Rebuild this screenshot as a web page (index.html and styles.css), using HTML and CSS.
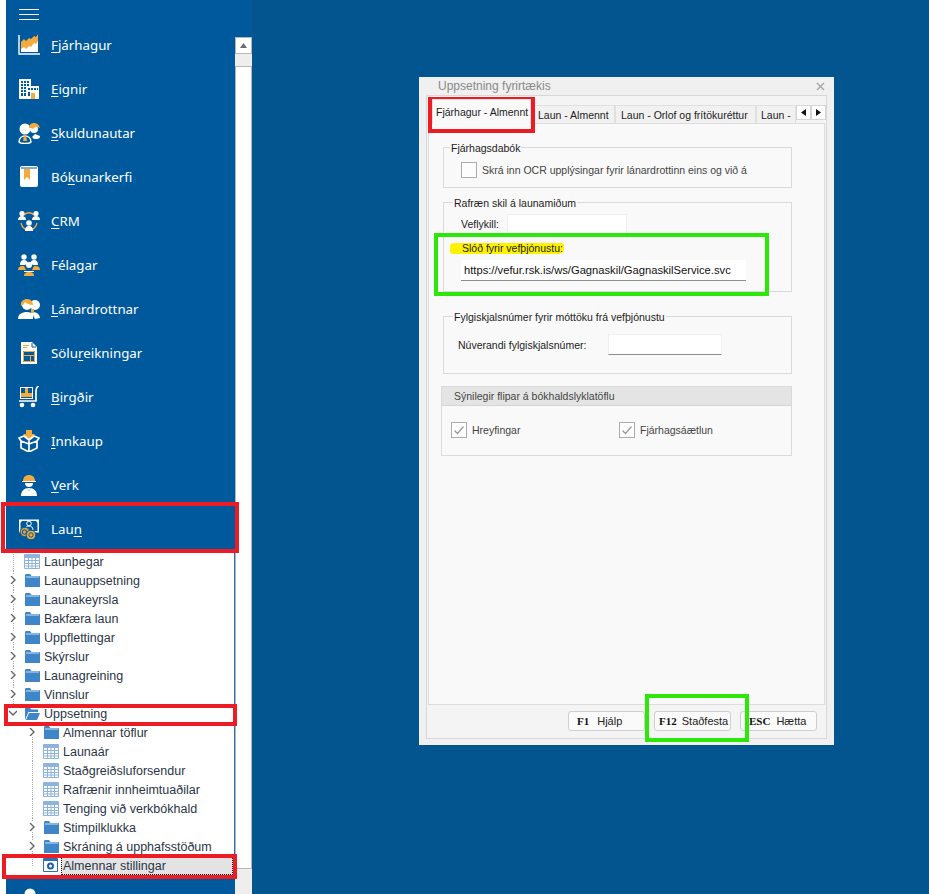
FILE: index.html
```html
<!DOCTYPE html>
<html lang="is">
<head>
<meta charset="utf-8">
<title>Uppsetning fyrirtækis</title>
<link rel="stylesheet" href="styles.css">
</head>
<body>
<div class="app">
  <aside class="sidebar">
    <nav class="nav">
      <div class="topbar"><span class="burger"><i></i><i></i><i></i></span></div>

      <a class="item"><svg class="ico" viewBox="0 0 22 22"><path d="M1 1v19h21" fill="none" stroke="#fff" stroke-width="1.400"/><path d="M3 18v-7l3-2 2 2 3-3 2 1 3-4 2 1 2-3v15z" fill="#fff"/><path d="M3 12V8l3-3 2 2 3-3 2 1 3-3 2 1 2-3v7l-2 3-2-1-3 4-2-1-3 3-2-2-3 2z" fill="#f2ab3c"/></svg><span><u>F</u>járhagur</span></a>

      <a class="item"><svg class="ico" viewBox="0 0 22 22"><path d="M1 1h12v7h8v13H1z" fill="#fff"/><path d="M3 3h2v2H3zm3 0h2v2H6zm3 0h2v2H9zM3 6h2v2H3zm3 0h2v2H6zm3 0h2v2H9zM3 9h2v2H3zm3 0h2v2H6zM3 12h2v2H3zm3 0h2v2H6zM3 15h2v3H3zm3 0h2v3H6zM10 10h2v2h-2zm3 0h2v2h-2zm3 0h2v2h-2zm3 0h1v2h-1zM10 14h2v4h-2z" fill="#00599c"/><path d="M13 15h4v6h-4z" fill="#f2ab3c"/></svg><span><u>E</u>ignir</span></a>

      <a class="item"><svg class="ico" viewBox="0 0 22 22"><circle cx="7" cy="7" r="5.500" fill="#fff"/><path d="M1 20c0-4 3-6 6-6s6 2 6 6c-2 2-10 2-12 0z" fill="none" stroke="#fff" stroke-width="1.500"/><path d="M6 13h2l1 6H5z" fill="#f2ab3c"/><circle cx="16" cy="7" r="4" fill="#fff"/><path d="M11 6c0-4 3-5 5-5s5 1 6 5c-3-2-6-1-7 1-1-1-2-1-4-1z" fill="#f2ab3c"/><path d="M14 15l3-3 5 2c0 2-1 3-3 3h-3z" fill="#fff"/></svg><span><u>S</u>kuldunautar</span></a>

      <a class="item"><svg class="ico" viewBox="0 0 22 22"><rect x="2" y="0" width="18" height="21" rx="2" fill="#fff"/><path d="M3 2h16" stroke="#00599c" stroke-width="1"/><path d="M6 3h6v11l-3-3-3 3z" fill="#f2ab3c"/></svg><span>Bó<u>k</u>unarkerfi</span></a>

      <a class="item"><svg class="ico" viewBox="0 0 22 22"><path d="M6 5c3-3 7-3 10 0M3 13c1 4 3 6 6 7M19 13c-1 4-3 6-6 7" fill="none" stroke="#f2ab3c" stroke-width="1.300"/><circle cx="4" cy="3.500" r="2.600" fill="#fff"/><path d="M0 10c0-3 2-4 4-4s4 1 4 4z" fill="#fff"/><circle cx="18" cy="3.500" r="2.600" fill="#fff"/><path d="M14 10c0-3 2-4 4-4s4 1 4 4z" fill="#fff"/><circle cx="11" cy="13" r="2.800" fill="#fff"/><path d="M7 21c0-4 2-5 4-5s4 1 4 5z" fill="#fff"/></svg><span><u>C</u>RM</span></a>

      <a class="item"><svg class="ico" viewBox="0 0 22 22"><circle cx="6" cy="3" r="2.700" fill="#fff"/><circle cx="16" cy="3" r="2.700" fill="#fff"/><path d="M2 11c0-4 2-5 4-5s3 1 4 3l-3 2zM20 11c0-4-2-5-4-5s-3 1-4 3l3 2z" fill="#fff"/><path d="M0 16c0-3 2-4 4-4h2l2 4zM22 16c0-3-2-4-4-4h-2l-2 4z" fill="#f2ab3c"/><circle cx="11" cy="11" r="3" fill="#fff"/><path d="M6 17h10v1H6z" fill="#fff"/><path d="M6 22c0-3 2-4 5-4s5 1 5 4z" fill="#f2ab3c"/></svg><span>Félagar</span></a>

      <a class="item"><svg class="ico" viewBox="0 0 22 22"><circle cx="17" cy="7" r="5" fill="#fff"/><path d="M13 14c3 0 8 0 9 6l-5 1z" fill="#fff"/><circle cx="9" cy="7" r="5" fill="#fff"/><path d="M3 8c-1-5 3-7 6-7 4 0 6 3 6 6-3 0-6-1-8-3-1 2-2 3-4 4z" fill="#f2ab3c"/><path d="M0 21c0-5 4-7 9-7 3 0 5 1 6 2v5z" fill="#fff"/><path d="M13 11h3v4h-3z" fill="#f2ab3c"/></svg><span><u>L</u>ánardrottnar</span></a>

      <a class="item"><svg class="ico" viewBox="0 0 22 22"><path d="M3 0h11l5 5v17H3z" fill="#fff"/><path d="M5 9h12v11H5z" fill="#00599c"/><path d="M5.500 9.500h11v10h-11zM5.500 13.500h11M12.500 13.500v6" fill="none" stroke="#f2ab3c"/><path d="M5 3h6v1H5zM5 5h4v1H5z" fill="#f2ab3c"/><path d="M14 1v4h4" fill="none" stroke="#00599c"/></svg><span>Sölu<u>r</u>eikningar</span></a>

      <a class="item"><svg class="ico" viewBox="0 0 22 22"><path d="M2 1h13v12H2z" fill="#fff"/><path d="M3 2h11v10H3z" fill="#00599c"/><path d="M3 7h11v4H3zM7 2h3v5H7z" fill="#f2ab3c"/><path d="M21 0c-3 1-3 3-3 5v10H1" fill="none" stroke="#fff" stroke-width="1.700"/><circle cx="4" cy="19" r="2.300" fill="#fff"/><circle cx="15" cy="19" r="2.300" fill="#fff"/></svg><span><u>B</u>irgðir</span></a>

      <a class="item"><svg class="ico" viewBox="0 0 22 22"><path d="M8 0h6v4h3l-6 6-6-6h3z" fill="#f2ab3c"/><path d="M1 8l5-2 5 4 5-4 5 2-2 3v7l-8 4-8-4v-7zM11 11v10M3 11l8 3 8-3" fill="none" stroke="#fff" stroke-width="1.700" stroke-linejoin="round"/></svg><span><u>I</u>nnkaup</span></a>

      <a class="item"><svg class="ico" viewBox="0 0 22 22"><path d="M5 7c0-4 3-6 6-6s6 2 6 6z" fill="#f2ab3c"/><path d="M4 7h14v1H4z" fill="#fff"/><path d="M7 9h8c0 3-2 4-4 4s-4-1-4-4z" fill="#fff"/><path d="M3 22c0-5 3-8 8-8s8 3 8 8z" fill="#fff"/><path d="M9 14l2 3 2-3" fill="none" stroke="#bcd3e6"/></svg><span><u>V</u>erk</span></a>

      <a class="item"><svg class="ico" viewBox="0 0 22 22"><path d="M1 1.500h20v13H1z" fill="#fff"/><path d="M2.500 3h17v10h-17z" fill="#00599c"/><path d="M2 2h3L2 5zM20 2h-3l3 3z" fill="#fff"/><circle cx="11" cy="5.500" r="2.300" fill="none" stroke="#fff"/><path d="M7 12c0-3 2-4 4-4s4 1 4 4" fill="none" stroke="#fff"/><circle cx="7" cy="14" r="4.800" fill="#d9a04a" stroke="#00599c"/><circle cx="13" cy="17" r="4.800" fill="#f2ab3c" stroke="#00599c"/><circle cx="13" cy="17" r="2.200" fill="none" stroke="#00599c"/><circle cx="6.500" cy="14" r="2.200" fill="none" stroke="#00599c"/></svg><span>Lau<u>n</u></span></a>

      <ul class="tree">
        <li class="row l1"><span class="twist"></span><svg class="tbl" viewBox="0 0 16 15"><use href="#grid"/></svg><span class="lab">Launþegar</span></li>
        <li class="row l1 more"><span class="twist"><svg class="chev" viewBox="0 0 6 8"><path d="M1 0l4 4-4 4" fill="none" stroke="#666" stroke-width="1.400"/></svg></span><svg class="fold" viewBox="0 0 15 13"><use href="#folder"/></svg><span class="lab">Launauppsetning</span></li>
        <li class="row l1 more"><span class="twist"><svg class="chev" viewBox="0 0 6 8"><path d="M1 0l4 4-4 4" fill="none" stroke="#666" stroke-width="1.400"/></svg></span><svg class="fold" viewBox="0 0 15 13"><use href="#folder"/></svg><span class="lab">Launakeyrsla</span></li>
        <li class="row l1 more"><span class="twist"><svg class="chev" viewBox="0 0 6 8"><path d="M1 0l4 4-4 4" fill="none" stroke="#666" stroke-width="1.400"/></svg></span><svg class="fold" viewBox="0 0 15 13"><use href="#folder"/></svg><span class="lab">Bakfæra laun</span></li>
        <li class="row l1 more"><span class="twist"><svg class="chev" viewBox="0 0 6 8"><path d="M1 0l4 4-4 4" fill="none" stroke="#666" stroke-width="1.400"/></svg></span><svg class="fold" viewBox="0 0 15 13"><use href="#folder"/></svg><span class="lab">Uppflettingar</span></li>
        <li class="row l1 more"><span class="twist"><svg class="chev" viewBox="0 0 6 8"><path d="M1 0l4 4-4 4" fill="none" stroke="#666" stroke-width="1.400"/></svg></span><svg class="fold" viewBox="0 0 15 13"><use href="#folder"/></svg><span class="lab">Skýrslur</span></li>
        <li class="row l1 more"><span class="twist"><svg class="chev" viewBox="0 0 6 8"><path d="M1 0l4 4-4 4" fill="none" stroke="#666" stroke-width="1.400"/></svg></span><svg class="fold" viewBox="0 0 15 13"><use href="#folder"/></svg><span class="lab">Launagreining</span></li>
        <li class="row l1 more"><span class="twist"><svg class="chev" viewBox="0 0 6 8"><path d="M1 0l4 4-4 4" fill="none" stroke="#666" stroke-width="1.400"/></svg></span><svg class="fold" viewBox="0 0 15 13"><use href="#folder"/></svg><span class="lab">Vinnslur</span></li>
        <li class="row l1 end"><span class="twist"><svg class="chev down" viewBox="0 0 8 6"><path d="M0 1l4 4 4-4" fill="none" stroke="#666" stroke-width="1.400"/></svg></span><svg class="fold" viewBox="0 0 15 13"><path d="M0 13V1h5l1.500 1.500H13V5H3.500zM1 13h11l3-7H4z" fill="#3f86c9"/></svg><span class="lab">Uppsetning</span></li>
        <li class="row l2 more"><span class="twist"><svg class="chev" viewBox="0 0 6 8"><path d="M1 0l4 4-4 4" fill="none" stroke="#666" stroke-width="1.400"/></svg></span><svg class="fold" viewBox="0 0 15 13"><use href="#folder"/></svg><span class="lab">Almennar töflur</span></li>
        <li class="row l2"><span class="twist"></span><svg class="tbl" viewBox="0 0 16 15"><use href="#grid"/></svg><span class="lab">Launaár</span></li>
        <li class="row l2"><span class="twist"></span><svg class="tbl" viewBox="0 0 16 15"><use href="#grid"/></svg><span class="lab">Staðgreiðsluforsendur</span></li>
        <li class="row l2"><span class="twist"></span><svg class="tbl" viewBox="0 0 16 15"><use href="#grid"/></svg><span class="lab">Rafrænir innheimtuaðilar</span></li>
        <li class="row l2"><span class="twist"></span><svg class="tbl" viewBox="0 0 16 15"><use href="#grid"/></svg><span class="lab">Tenging við verkbókhald</span></li>
        <li class="row l2 more"><span class="twist"><svg class="chev" viewBox="0 0 6 8"><path d="M1 0l4 4-4 4" fill="none" stroke="#666" stroke-width="1.400"/></svg></span><svg class="fold" viewBox="0 0 15 13"><use href="#folder"/></svg><span class="lab">Stimpilklukka</span></li>
        <li class="row l2 more"><span class="twist"><svg class="chev" viewBox="0 0 6 8"><path d="M1 0l4 4-4 4" fill="none" stroke="#666" stroke-width="1.400"/></svg></span><svg class="fold" viewBox="0 0 15 13"><use href="#folder"/></svg><span class="lab">Skráning á upphafsstöðum</span></li>
        <li class="row l2 end sel"><span class="twist"></span><svg class="tbl" viewBox="0 0 16 15"><path d="M.500 .500h14v13H.500z" fill="#fff" stroke="#2c6fb3"/><path d="M1 1h13v2H1z" fill="#2c6fb3"/><circle cx="7.500" cy="8" r="2.500" fill="none" stroke="#1f5fa8" stroke-width="2"/></svg><span class="lab">Almennar stillingar</span></li>
      </ul>

      <a class="item"><svg class="ico" viewBox="0 0 22 22"><circle cx="12" cy="8" r="5.500" fill="#fff"/></svg></a>
    </nav>

    <div class="scroll">
      <div class="sc-top"></div>
      <div class="sc-btn"><svg class="sc-arrow" viewBox="0 0 7 5"><path d="M3.500 0L7 5H0z" fill="#6d6d6d"/></svg></div>
      <div class="sc-thumb"></div>
      <div class="sc-track"></div>
      <div class="sc-corner"></div>
    </div>
  </aside>

  <main class="desktop">
    <section class="dialog">
      <header class="titlebar"><span class="title">Uppsetning fyrirtækis</span><svg class="close" viewBox="0 0 9 9"><path d="M1 1l7 7M8 1L1 8" stroke="#a9a9a9" stroke-width="1.500"/></svg></header>

      <div class="inner">
        <div class="tabs">
          <span class="tab active">Fjárhagur - Almennt</span>
          <span class="tab t2">Laun - Almennt</span>
          <span class="tab t3">Laun - Orlof og frítökuréttur</span>
          <span class="tab t4">Laun -</span>
          <span class="arrows">
            <span class="arw"><svg viewBox="0 0 5 7"><path d="M5 0v7L0 3.500z" fill="#111"/></svg></span>
            <span class="arw"><svg viewBox="0 0 5 7"><path d="M0 0v7l5-3.500z" fill="#111"/></svg></span>
          </span>
        </div>

        <div class="panel">
          <div class="group g1">
            <span class="legend l-a">Fjárhagsdabók</span>
            <label class="check-row"><span class="box"></span><span class="muted">Skrá inn OCR upplýsingar fyrir lánardrottinn eins og við á</span></label>
          </div>

          <div class="group g2">
            <span class="legend">Rafræn skil á launamiðum</span>
            <div class="field-row"><span class="f-lab">Veflykill:</span><input class="input key" type="text" readonly></div>
            <div class="url-lab"><span class="mark">Slóð fyrir vefþjónustu:</span></div>
            <input class="input url" type="text" readonly value="https://vefur.rsk.is/ws/Gagnaskil/GagnaskilService.svc">
          </div>

          <div class="group g3">
            <span class="legend">Fylgiskjalsnúmer fyrir móttöku frá vefþjónustu</span>
            <div class="doc-row"><span class="doc-lab">Núverandi fylgiskjalsnúmer:</span><input class="input doc" type="text" readonly></div>
          </div>

          <div class="group g4">
            <div class="g4-head">Sýnilegir flipar á bókhaldslyklatöflu</div>
            <div class="g4-body">
              <label class="chk c1"><span class="box"><svg viewBox="0 0 14 14"><path d="M2.500 7.500l3 3 6-7" fill="none" stroke="#9a9a9a" stroke-width="1.200"/></svg></span><span class="muted">Hreyfingar</span></label>
              <label class="chk"><span class="box"><svg viewBox="0 0 14 14"><path d="M2.500 7.500l3 3 6-7" fill="none" stroke="#9a9a9a" stroke-width="1.200"/></svg></span><span class="muted">Fjárhagsáætlun</span></label>
            </div>
          </div>
        </div>

        <footer class="footer">
          <button class="btn b1"><b>F1</b>Hjálp</button>
          <button class="btn b2"><b>F12</b>Staðfesta</button>
          <button class="btn b3"><b>ESC</b>Hætta</button>
        </footer>
      </div>
    </section>
  </main>
</div>

<div class="mk red m-tab"></div>
<div class="mk red m-laun"></div>
<div class="mk red m-upp"></div>
<div class="mk red m-alm"></div>
<div class="mk green m-url"></div>
<div class="mk green m-btn"></div>

<svg class="defs" width="0" height="0">
  <defs>
    <g id="grid"><path d="M.500 .500h15v14H.500z" fill="#fff" stroke="#8db4dc"/><path d="M1 1h14v3H1z" fill="#8db4dc"/><path d="M4.500 4v10M8 4v10M11.500 4v10M1 6.500h14M1 9.500h14M1 12h14" stroke="#8db4dc" fill="none"/></g>
    <g id="folder"><path d="M0 13V1.500C0 .7.500 0 1.300 0H5l1.500 2H14c.6 0 1 .4 1 1v10z" fill="#3f86c9"/><path d="M1 3h13" stroke="#cfe2f3"/></g>
  </defs>
</svg>
</body>
</html>
```

FILE: styles.css
```css
* { box-sizing: border-box; }
html, body { margin: 0; height: 100%; overflow: hidden; }
body { font-family: "Liberation Sans", Arial, sans-serif; background: #fff; position: relative; }
.app { display: flex; height: 894px; width: 929px; }
ul { margin: 0; padding: 0; list-style: none; }

/* sidebar */
.sidebar { width: 252px; flex: none; display: flex; padding-left: 6px; background: #fff; overflow: hidden; }
.nav { width: 229px; flex: none; display: flex; flex-direction: column; background: #00599c; }
.topbar { height: 24px; flex: none; padding: 9px 0 0 13px; }
.burger { display: flex; flex-direction: column; gap: 4px; width: 20px; }
.burger i { display: block; height: 1px; background: #fff; }
.item { height: 44px; flex: none; display: flex; align-items: center; gap: 11px; padding: 0 0 2px 12px; color: #fff; font-family: "Noto Sans", sans-serif; font-size: 13.3px; }
.ico { width: 22px; height: 22px; flex: none; }
.item u { text-underline-offset: 2px; text-decoration-thickness: 1px; }

/* tree */
.tree { flex: none; height: 324px; background: #fff; border-right: 1px solid #2c6fb3; }
.row { height: 19px; display: flex; align-items: center; font-size: 12.5px; color: #2b3548; }
.l1 { padding-left: 7px; }
.l2 { padding-left: 26px; }
.twist { width: 11px; height: 19px; flex: none; position: relative; background: radial-gradient(circle, #a9a9a9 .6px, transparent .7px) 0 9px / 2px 2px repeat-x; }
.twist::before { content: ""; position: absolute; left: 0; top: 0; bottom: 0; border-left: 1px dotted #a9a9a9; }
.end .twist::before { bottom: 9px; }
.chev { position: absolute; left: -3px; top: 5px; width: 6px; height: 8px; background: #fff; box-shadow: 0 0 0 1px #fff; }
.chev.down { width: 8px; height: 6px; left: -4px; top: 6px; }
.tbl { width: 16px; height: 15px; flex: none; margin-right: 4px; }
.fold { width: 15px; height: 13px; flex: none; margin: 0 4px 0 1px; }
.lab { white-space: nowrap; }
.sel .lab { flex: 1; height: 18px; line-height: 16px; background: #e3e3e3; border: 1px dotted #111; margin: 0 1px 0 -2px; padding-left: 1px; }

/* scrollbar */
.scroll { width: 17px; flex: none; display: flex; flex-direction: column; }
.sc-top { height: 37px; background: #00599c; }
.sc-btn { height: 17px; background: #fff; border: 1px solid #b5b5b5; display: flex; align-items: center; justify-content: center; }
.sc-arrow { width: 7px; height: 5px; }
.sc-thumb { height: 12px; background: #eee; }
.sc-track { flex: 1; background: #fff; border: 1px solid #b5b5b5; }
.sc-corner { height: 25px; background: #eee; }

/* desktop + dialog */
.desktop { flex: 1; background: #03558f; position: relative; }
.dialog { position: absolute; left: 167px; top: 77px; width: 415px; height: 668px; background: #f0f0f0; display: flex; flex-direction: column; padding: 0 7px 6px 7px; font-size: 10.5px; color: #1c1c1c; }
.titlebar { height: 18px; flex: none; display: flex; align-items: center; justify-content: space-between; padding: 0 2px 0 12px; }
.title { color: #8a8a8a; font-size: 12px; }
.close { width: 9px; height: 9px; }
.inner { flex: 1; display: flex; flex-direction: column; border: 1px solid #d8d8d8; background: #f4f4f4; }
.tabs { height: 27px; flex: none; display: flex; align-items: flex-end; position: relative; padding-left: 5px; }
.tab { height: 18px; line-height: 18px; padding: 0 5px; white-space: nowrap; background: #f1f1f1; border: 1px solid #e0e0e0; border-bottom: 0; overflow: hidden; }
.tab.active { height: 25px; width: 99px; line-height: 24px; padding: 0 3px; background: #f9f9f9; position: relative; z-index: 1; margin-bottom: -1px; }
.t2 { width: 84px; padding-left: 6px; }
.t3 { width: 141px; padding-left: 5px; }
.t4 { width: 40px; padding-left: 4px; }
.arrows { display: flex; align-items: center; align-self: flex-end; height: 15px; margin-bottom: 3px; }
.arw { width: 15px; height: 15px; background: #fff; border: 1px solid #d5d5d5; display: flex; align-items: center; justify-content: center; }
.arw svg { width: 5px; height: 7px; }
.panel { flex: 1; background: #f9f9f9; border: 1px solid #dcdcdc; margin: 0 1px; padding: 23px 0 0 14px; display: flex; flex-direction: column; align-items: flex-start; }
.group { width: 349px; border: 1px solid #dadada; }
.legend { display: block; width: fit-content; height: 14px; line-height: 14px; margin: -7px 0 0 9px; padding: 0 1px; background: #f9f9f9; white-space: nowrap; }
.l-a { margin-left: 6px; }
.g1 { height: 41px; }
.g2 { height: 90px; margin-top: 14px; }
.g3 { height: 58px; margin-top: 24px; }
.g4 { height: 70px; margin: 12px 0 0 -2px; width: 351px; }
.box { width: 16px; height: 16px; flex: none; border: 1px solid #acacac; background: #fdfdfd; display: block; }
.box svg { display: block; width: 14px; height: 14px; }
.muted { color: #444; }
.check-row { display: flex; align-items: center; gap: 5px; margin: 7px 0 0 17px; }
.field-row { display: flex; align-items: center; margin: 4px 0 0 17px; }
.f-lab { width: 46px; }
.input { display: block; border: 0; border-radius: 0; background: #fff; padding: 0 3px; margin: 0; font: inherit; color: #111; outline: 0; }
.key { width: 120px; height: 20px; border: 1px solid #eee; }
.url-lab { margin: 9px 0 0 6px; height: 11px; line-height: 11px; }
.mark { display: inline-block; height: 11px; width: 114px; padding-left: 12px; background: #fff200; border-radius: 4px 2px 5px 3px; white-space: nowrap; }
.url { width: 285px; height: 21px; margin: 6px 0 0 17px; border-bottom: 1px solid #8c8c8c; font-size: 11.2px; }
.doc-row { display: flex; align-items: center; margin: 10px 0 0 14px; }
.doc-lab { width: 150px; }
.doc { width: 114px; height: 21px; border: 1px solid #eee; border-bottom-color: #8c8c8c; }
.g4-head { height: 19px; line-height: 18px; background: #e4e4e4; border-bottom: 1px solid #d4d4d4; padding-left: 12px; color: #444; }
.g4-body { display: flex; padding: 16px 0 0 9px; }
.chk { display: flex; align-items: center; gap: 5px; }
.c1 { width: 168px; }
.footer { height: 33px; flex: none; display: flex; gap: 9px; padding: 6px 0 0 141px; }
.btn { width: 77px; height: 20px; display: flex; align-items: center; padding: 0 0 0 8px; background: #fafafa; border: 1px solid #cfcfcf; border-radius: 3px; font: inherit; font-size: 11px; color: #222; }
.btn b { font-family: "Liberation Serif", serif; font-size: 11px; font-weight: 700; margin-right: 8px; color: #111; }
.b2 { padding-left: 4px; }
.b2 b { margin-right: 5px; }
.b3 b { margin-right: 6px; }

/* annotations drawn on top of the screenshot */
.mk { position: absolute; border: 4px solid; pointer-events: none; }
.red { border-color: #ed1c24; }
.green { border-color: #2de60a; }
.m-tab { left: 428px; top: 97px; width: 107px; height: 36px; }
.m-laun { left: 1px; top: 502px; width: 238px; height: 51px; }
.m-upp { left: 4px; top: 704px; width: 233px; height: 22px; }
.m-alm { left: 2px; top: 854px; width: 235px; height: 25px; }
.m-url { left: 434px; top: 233px; width: 335px; height: 63px; }
.m-btn { left: 645px; top: 694px; width: 104px; height: 48px; }
.defs { position: absolute; }
```
